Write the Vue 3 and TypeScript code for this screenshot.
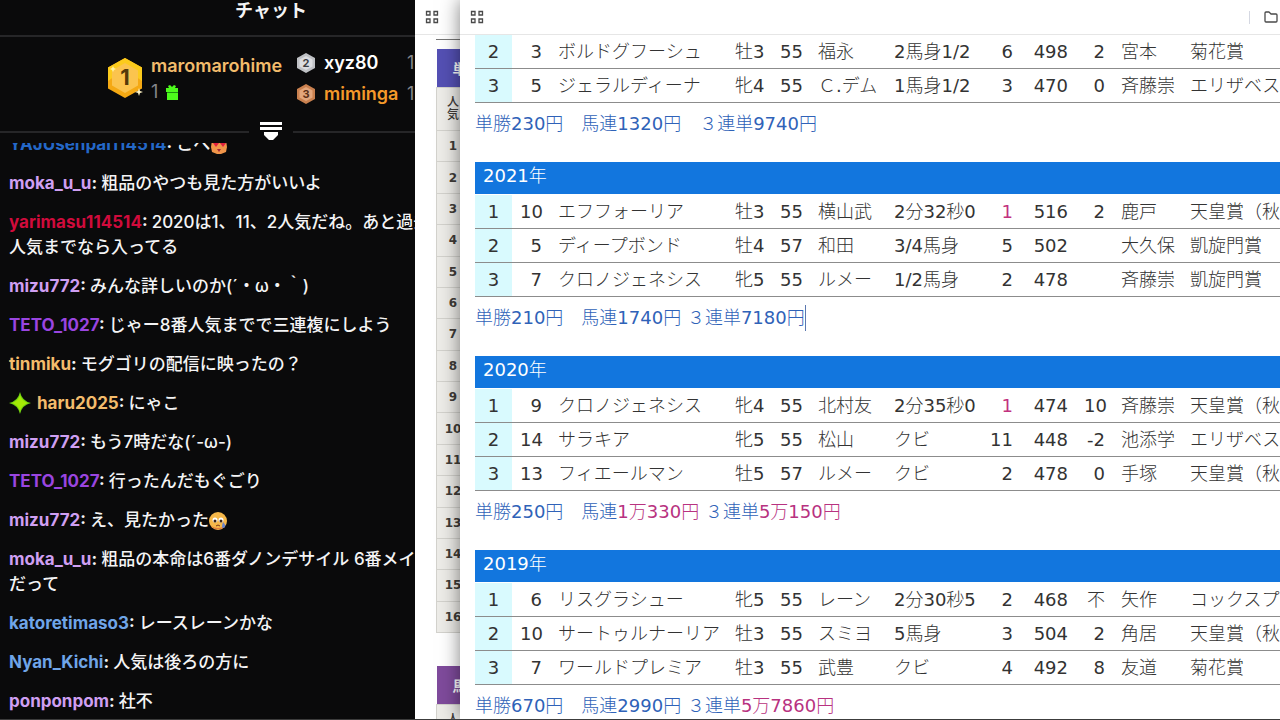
<script setup lang="ts">
interface Message {
  user: string
  color: string
  lines: string[]
  badge?: boolean
  emote?: 'love' | 'tear'
}

const messages: Message[] = [
  { user: 'YAJUsenpai114514', color: 'blue', lines: ['こへ'], emote: 'love' },
  { user: 'moka_u_u', color: 'lilac', lines: ['粗品のやつも見た方がいいよ'] },
  { user: 'yarimasu114514', color: 'red', lines: ['2020は1、11、2人気だね。あと過去', '人気までなら入ってる'] },
  { user: 'mizu772', color: 'lilac', lines: ['みんな詳しいのか(´・ω・｀)'] },
  { user: 'TETO_1027', color: 'purple', lines: ['じゃー8番人気までで三連複にしよう'] },
  { user: 'tinmiku', color: 'amber', lines: ['モグゴリの配信に映ったの？'] },
  { user: 'haru2025', color: 'amber', lines: ['にゃこ'], badge: true },
  { user: 'mizu772', color: 'lilac', lines: ['もう7時だな(´-ω-)'] },
  { user: 'TETO_1027', color: 'purple', lines: ['行ったんだもぐごり'] },
  { user: 'mizu772', color: 'lilac', lines: ['え、見たかった'], emote: 'tear' },
  { user: 'moka_u_u', color: 'lilac', lines: ['粗品の本命は6番ダノンデサイル 6番メイシ', 'だって'] },
  { user: 'katoretimaso3', color: 'sky', lines: ['レースレーンかな'] },
  { user: 'Nyan_Kichi', color: 'sky', lines: ['人気は後ろの方に'] },
  { user: 'ponponpom', color: 'lilac', lines: ['社不'] },
]

interface Payout {
  text: string
  high?: boolean
}

interface Race {
  year?: string
  rows: string[][]
  payouts: Payout[]
  caret?: boolean
}

const races: Race[] = [
  {
    rows: [
      ['2', '3', 'ボルドグフーシュ', '牡3', '55', '福永', '2馬身1/2', '6', '498', '2', '宮本', '菊花賞'],
      ['3', '5', 'ジェラルディーナ', '牝4', '55', 'Ｃ.デム', '1馬身1/2', '3', '470', '0', '斉藤崇', 'エリザベス'],
    ],
    payouts: [{ text: '単勝230円　馬連1320円　３連単9740円' }],
  },
  {
    year: '2021年',
    rows: [
      ['1', '10', 'エフフォーリア', '牡3', '55', '横山武', '2分32秒0', '1', '516', '2', '鹿戸', '天皇賞（秋'],
      ['2', '5', 'ディープボンド', '牡4', '57', '和田', '3/4馬身', '5', '502', '', '大久保', '凱旋門賞'],
      ['3', '7', 'クロノジェネシス', '牝5', '55', 'ルメー', '1/2馬身', '2', '478', '', '斉藤崇', '凱旋門賞'],
    ],
    payouts: [{ text: '単勝210円　馬連1740円 ３連単7180円' }],
    caret: true,
  },
  {
    year: '2020年',
    rows: [
      ['1', '9', 'クロノジェネシス', '牝4', '55', '北村友', '2分35秒0', '1', '474', '10', '斉藤崇', '天皇賞（秋'],
      ['2', '14', 'サラキア', '牝5', '55', '松山', 'クビ', '11', '448', '-2', '池添学', 'エリザベス'],
      ['3', '13', 'フィエールマン', '牡5', '57', 'ルメー', 'クビ', '2', '478', '0', '手塚', '天皇賞（秋'],
    ],
    payouts: [
      { text: '単勝250円　馬連' },
      { text: '1万330円', high: true },
      { text: ' ３連単' },
      { text: '5万150円', high: true },
    ],
  },
  {
    year: '2019年',
    rows: [
      ['1', '6', 'リスグラシュー', '牝5', '55', 'レーン', '2分30秒5', '2', '468', '不', '矢作', 'コックスプ'],
      ['2', '10', 'サートゥルナーリア', '牡3', '55', 'スミヨ', '5馬身', '3', '504', '2', '角居', '天皇賞（秋'],
      ['3', '7', 'ワールドプレミア', '牡3', '55', '武豊', 'クビ', '4', '492', '8', '友道', '菊花賞'],
    ],
    payouts: [{ text: '単勝670円　馬連2990円 ３連単' }, { text: '5万7860円', high: true }],
  },
]

const columns = ['rank', 'num', 'name', 'sex', 'load', 'jockey', 'margin', 'pop', 'weight', 'diff', 'trainer', 'prev']
</script>

<template>
  <div class="desktop">
    <section class="chat">
      <div class="chat-inner">
        <header class="chat-head"><h1>チャット</h1></header>

        <div class="leaders">
          <svg class="hex-big" viewBox="0 0 38 42" aria-hidden="true">
            <path d="M19 1 36 10.500V31.500L19 41 2 31.500V10.500Z" fill="#f5a913" />
            <path d="M19 1 36 10.500V24L19 12 2 24V10.500Z" fill="#fccb1c" />
            <path d="M19 6 32 13.500V28.500L19 36 6 28.500V13.500Z" fill="#fbc44e" />
            <path d="M33 31l1 3 3 1-3 1-1 3-1-3-3-1 3-1z" fill="#fff3c4" />
            <path d="M7 9l1 2 2 1-2 1-1 2-1-2-2-1 2-1z" fill="#fff3a0" />
            <text x="19" y="28" text-anchor="middle" class="hex-num" font-size="22" fill="#54390a">1</text>
          </svg>
          <div class="first">
            <span class="leader amber">maromarohime</span>
            <span class="count">1
              <svg class="gift" viewBox="0 0 14 15" aria-hidden="true">
                <path d="M1 3h3L3 1l2-1 2 2 2-2 2 1-1 2h3v4H1zM2 8h11v7H2z" fill="#4dfa1c" />
                <path d="M2 7h11v1H2z" fill="#1d8f10" />
              </svg>
            </span>
          </div>
          <div class="rest">
            <div class="rest-row">
              <svg class="hex" viewBox="0 0 20 22" aria-hidden="true">
                <path d="M10 1 19 6V16L10 21 1 16V6Z" fill="#bfc1c5" />
                <path d="M10 4 16.500 7.500V14.500L10 18 3.500 14.500V7.500Z" fill="#dcdde0" />
                <text x="10" y="15" text-anchor="middle" class="hex-num" font-size="11" fill="#3c3d42">2</text>
              </svg>
              <span class="leader white">xyz80</span><span class="count tail">1</span>
            </div>
            <div class="rest-row">
              <svg class="hex" viewBox="0 0 20 22" aria-hidden="true">
                <path d="M10 1 19 6V16L10 21 1 16V6Z" fill="#c9804f" />
                <path d="M10 4 16.500 7.500V14.500L10 18 3.500 14.500V7.500Z" fill="#e3a67c" />
                <text x="10" y="15" text-anchor="middle" class="hex-num" font-size="11" fill="#5b3017">3</text>
              </svg>
              <span class="leader orange">miminga</span><span class="count tail">1</span>
            </div>
          </div>
        </div>

        <div class="divider">
          <button type="button" class="collapse" aria-label="ランキングを折りたたむ">
            <svg viewBox="0 0 22 20" aria-hidden="true">
              <path d="M0 1h22v3H0zM0 6h22v3H0zM4 11h14v3l-5 5h-4l-5-5z" fill="#fff" />
            </svg>
          </button>
        </div>

        <ul class="messages">
          <li v-for="(m, i) in messages" :key="i">
            <svg v-if="m.badge" class="badge" viewBox="0 0 22 22" aria-hidden="true">
              <path d="M11 0Q13 9 22 11 13 13 11 22 9 13 0 11 9 9 11 0Z" fill="#6fd011" />
              <path d="M11 3Q13 9 19 11 13 13 11 19 9 13 3 11 9 9 11 3Z" fill="#a4ea06" />
            </svg>
            <span class="user" :class="m.color">{{ m.user }}</span><span class="colon">: </span>
            <template v-for="(line, n) in m.lines" :key="n"><br v-if="n > 0" />{{ line }}</template>
            <svg v-if="m.emote === 'love'" class="emote" viewBox="0 0 18 18" aria-hidden="true">
              <path d="M2 4 4 1l3 2h4l3-2 2 3 1 7-1 5-5 2H7l-5-2-1-5z" fill="#f0954a" />
              <path d="M3 7l2-2 1 1 1-1 2 2-3 4zM10 7l2-2 1 1 1-1 2 2-3 4z" fill="#e0213f" />
              <path d="M7 13h4l-2 3z" fill="#a3243a" />
            </svg>
            <svg v-if="m.emote === 'tear'" class="emote" viewBox="0 0 18 18" aria-hidden="true">
              <circle cx="9" cy="9" r="9" fill="#f6b84a" />
              <path d="M2 14a9 9 0 0 0 14 0q-7 4-14 0z" fill="#e07a3c" />
              <circle cx="6" cy="8" r="2.500" fill="#fff" /><circle cx="12" cy="8" r="2.500" fill="#fff" />
              <circle cx="6" cy="9" r="1.500" fill="#3a2418" /><circle cx="12" cy="9" r="1.500" fill="#3a2418" />
              <path d="M7 14q2-2 4 0" stroke="#7a3a1c" fill="none" />
              <path d="M14 10q3 3 2 5-2 2-3 0 0-2 1-5z" fill="#6b83c9" />
            </svg>
          </li>
        </ul>
      </div>
    </section>

    <section class="odds">
      <div class="toolbar">
        <button type="button" class="tool" aria-label="アプリ">
          <svg viewBox="0 0 14 14" fill="none" stroke="#4a4a4a" stroke-width="1.300" aria-hidden="true">
            <path d="M1.500 1.500h3.500v3.500H1.500zM9 1.500h3.500v3.500H9zM1.500 9h3.500v3.500H1.500zM9 9h3.500v3.500H9z" />
          </svg>
        </button>
      </div>
      <div class="odds-body">
        <table class="odds-table">
          <thead>
            <tr><th class="kind win">単勝</th></tr>
            <tr><th class="label">人<br />気</th></tr>
          </thead>
          <tbody>
            <tr v-for="n in 16" :key="n"><td>{{ n }}</td></tr>
          </tbody>
        </table>
        <table class="odds-table second">
          <thead>
            <tr><th class="kind exacta">馬単</th></tr>
            <tr><th class="label">人<br />気</th></tr>
          </thead>
        </table>
      </div>
    </section>

    <section class="results">
      <div class="toolbar">
        <button type="button" class="tool" aria-label="アプリ">
          <svg viewBox="0 0 14 14" fill="none" stroke="#4a4a4a" stroke-width="1.300" aria-hidden="true">
            <path d="M1.500 1.500h3.500v3.500H1.500zM9 1.500h3.500v3.500H9zM1.500 9h3.500v3.500H1.500zM9 9h3.500v3.500H9z" />
          </svg>
        </button>
        <span class="spacer"></span>
        <span class="separator"></span>
        <button type="button" class="tool" aria-label="フォルダー">
          <svg viewBox="0 0 14 14" fill="none" stroke="#4a4a4a" stroke-width="1.300" stroke-linejoin="round" aria-hidden="true">
            <path d="M1 11V3q0-1 1-1h3l2 2h5q1 0 1 1v6q0 1-1 1H2q-1 0-1-1z" />
          </svg>
        </button>
      </div>
      <div class="sheet">
        <article v-for="(race, r) in races" :key="r" class="race">
          <h2 v-if="race.year">{{ race.year }}</h2>
          <table class="result-table">
            <colgroup><col v-for="c in columns" :key="c" :class="'w-' + c" /></colgroup>
            <tbody>
              <tr v-for="(row, i) in race.rows" :key="i">
                <td v-for="(cell, c) in row" :key="c" :class="[columns[c], { top: columns[c] === 'pop' && cell === '1' }]">{{ cell }}</td>
              </tr>
            </tbody>
          </table>
          <p class="payout"><span v-for="(p, i) in race.payouts" :key="i" :class="{ high: p.high }">{{ p.text }}</span><span v-if="race.caret" class="caret"></span></p>
        </article>
      </div>
    </section>
  </div>
</template>

<style>
body {
  margin: 0;
  overflow: hidden;
}
</style>

<style scoped>
.desktop {
  display: grid;
  grid-template-columns: 415px 45px 1fr;
  grid-template-rows: minmax(0, 1fr);
  height: 100vh;
  box-sizing: border-box;
  border-bottom: 1px solid #3c3c3c;
  overflow: hidden;
  background: #fff;
}
button {
  padding: 0;
  border: 0;
  background: none;
  display: block;
}
svg {
  display: block;
}

/* chat */
.chat {
  overflow: hidden;
  min-height: 0;
  background: #0a0a0b;
  color: #f4f4f5;
  font-family: Inter, "Noto Sans CJK JP", sans-serif;
}
.chat-inner {
  width: 542px;
  height: 100%;
  display: flex;
  flex-direction: column;
}
.chat-head {
  height: 35px;
  border-bottom: 2px solid #262628;
}
.chat-head h1 {
  margin: 0;
  line-height: 22px;
  font-size: 18px;
  font-weight: 700;
  text-align: center;
}
.leaders {
  height: 92px;
  display: flex;
  padding-left: 106px;
  box-sizing: border-box;
}
.hex-big {
  width: 38px;
  height: 42px;
  margin-top: 20px;
}
.hex-num {
  font-family: Inter, sans-serif;
  font-weight: 700;
}
.first {
  margin: 16px 0 0 7px;
  width: 144px;
}
.leader {
  font-size: 18px;
  line-height: 26px;
  font-weight: 600;
}
.count {
  display: flex;
  gap: 7px;
  font-size: 18px;
  line-height: 26px;
  color: #85868c;
}
.gift {
  width: 14px;
  height: 15px;
  margin-top: 6px;
}
.rest {
  padding-top: 10px;
}
.rest-row {
  display: flex;
  align-items: center;
  height: 31px;
}
.hex {
  width: 20px;
  height: 22px;
  margin: 0 8px 0 1px;
}
.rest-row .leader {
  width: 83px;
}
.divider {
  height: 14px;
  display: flex;
  align-items: flex-start;
}
.divider::before,
.divider::after {
  content: "";
  flex: 1;
  height: 2px;
  margin-top: 2px;
  background: #262628;
}
.collapse {
  width: 22px;
  margin: -8px 11px 0;
}
.collapse svg {
  width: 22px;
  height: 20px;
}
.messages {
  flex: 1;
  min-height: 0;
  overflow: hidden;
  margin: 0;
  padding: 0 0 5px 9px;
  list-style: none;
  display: flex;
  flex-direction: column;
  justify-content: flex-end;
  gap: 14px;
  font-size: 17px;
  line-height: 25px;
  font-weight: 500;
  white-space: nowrap;
}
.messages li {
  flex: none;
}
.user,
.colon {
  font-weight: 700;
}
.badge {
  display: inline-block;
  width: 22px;
  height: 22px;
  margin-right: 6px;
  vertical-align: -5px;
}
.emote {
  display: inline-block;
  width: 18px;
  height: 18px;
  vertical-align: -4px;
}
.blue { color: #2468c8; }
.lilac { color: #cf9ff2; }
.red { color: #d00b3c; }
.purple { color: #9a45e0; }
.amber { color: #f3bc6c; }
.orange { color: #f5992a; }
.sky { color: #6fa5e8; }
.white { color: #fff; }

/* windows */
.toolbar {
  display: flex;
  align-items: center;
  flex: none;
  height: 34px;
  padding: 0 2px 0 10px;
  border-bottom: 1px solid #e6e6e6;
}
.tool svg {
  width: 14px;
  height: 14px;
}
.spacer {
  flex: 1;
}
.separator {
  width: 1px;
  height: 13px;
  margin-right: 14px;
  background: #d5d8e2;
}

/* odds window */
.odds {
  min-width: 0;
  overflow: hidden;
  background: #fff;
}
.odds-body {
  margin: 4px 0 0 21px;
  padding-top: 9px;
  border-top: 1px solid #777;
}
.odds-table {
  width: 34px;
  table-layout: fixed;
  border-collapse: collapse;
  font: 700 12px "DejaVu Sans", "Noto Sans CJK JP", sans-serif;
  color: #403c38;
  height: 584px;
}
.odds-table td,
.odds-table .label {
  padding: 0;
  border: 1px solid #d3d2cd;
  background: #edece8;
  text-align: center;
}
.odds-table .label {
  height: 42px;
  font-weight: 500;
  line-height: 13px;
}
.odds-table .kind {
  height: 38px;
  padding: 0 0 0 16px;
  color: #fff;
  font-size: 14px;
  text-align: left;
  white-space: nowrap;
}
.win { background: #5450b4; }
.exacta { background: #7f4b9c; }
.odds-table.second {
  height: auto;
  margin-top: 33px;
}

/* results window */
.results {
  position: relative;
  min-width: 0;
  display: flex;
  flex-direction: column;
  background: #fff;
  box-shadow: 0 0 18px rgba(0, 0, 0, 0.5);
  font-family: "DejaVu Sans", "Noto Sans CJK JP Light", "Noto Sans CJK JP", sans-serif;
  font-size: 18px;
  color: #333;
}
.sheet {
  flex: 1;
  min-height: 0;
  overflow: hidden;
  padding-left: 15px;
}
.race h2 {
  margin: 0 0 1px;
  padding-left: 8px;
  height: 32px;
  line-height: 28px;
  font-size: 18px;
  font-weight: 400;
  color: #fff;
  background: #1276de;
}
.result-table {
  width: 100%;
  table-layout: fixed;
  border-collapse: separate;
  border-spacing: 0;
}
.result-table td {
  height: 33px;
  padding: 0 8px;
  border-bottom: 1px solid #8c8c8c;
  line-height: 24px;
  white-space: nowrap;
}
.result-table td.rank {
  padding: 0;
  text-align: center;
  background: #d9fafe;
}
.result-table td.num,
.result-table td.pop,
.result-table td.weight,
.result-table td.diff {
  text-align: right;
}
.result-table td.top {
  color: #c2317f;
}
.result-table td.prev {
  padding-right: 0;
  overflow: hidden;
}
.w-rank { width: 37px; }
.w-num { width: 38px; }
.w-name { width: 177px; }
.w-sex { width: 45px; }
.w-load { width: 38px; }
.w-jockey { width: 76px; }
.w-margin { width: 80px; }
.w-pop { width: 55px; }
.w-weight { width: 55px; }
.w-diff { width: 37px; }
.w-trainer { width: 69px; }
.payout {
  margin: 0;
  height: 51px;
  padding-top: 8px;
  line-height: 26px;
  white-space: pre;
  color: #2f62b8;
}
.payout .high {
  color: #b83280;
}
.caret {
  display: inline-block;
  width: 1px;
  height: 26px;
  vertical-align: top;
  background: #5b78b0;
}
</style>
